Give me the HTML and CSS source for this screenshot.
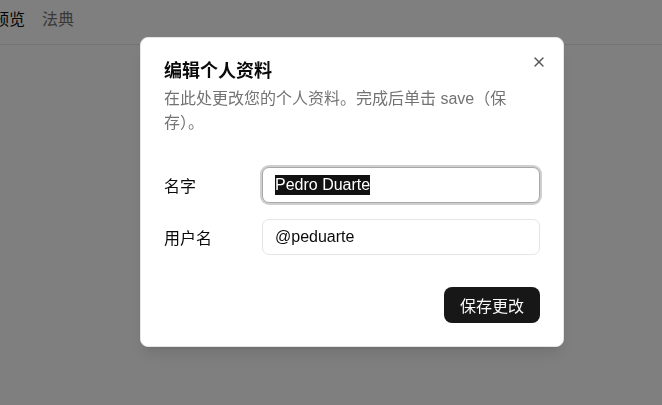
FILE: index.html
```html
<!DOCTYPE html>
<html lang="zh-CN">
<head>
<meta charset="utf-8">
<link rel="stylesheet" href="styles.css">
</head>
<body>
<header class="nav">
  <span class="nav-item active">预览</span>
  <span class="nav-item">法典</span>
</header>
<main class="page"></main>
<div class="overlay"></div>
<div class="dialog">
  <div class="dialog-header">
    <h2 class="dialog-title">编辑个人资料</h2>
    <p class="dialog-desc">在此处更改您的个人资料。完成后单击 save（保存）。</p>
  </div>
  <div class="form">
    <label class="label">名字</label>
    <div class="input focused"><span class="sel">Pedro Duarte</span></div>
    <label class="label">用户名</label>
    <div class="input">@peduarte</div>
  </div>
  <div class="footer">
    <button class="btn">保存更改</button>
  </div>
  <button class="close" aria-label="关闭">
    <svg width="16" height="16" viewBox="0 0 24 24" fill="none" stroke="currentColor" stroke-width="2" stroke-linecap="round" stroke-linejoin="round"><path d="M18 6 6 18"/><path d="m6 6 12 12"/></svg>
  </button>
</div>
</body>
</html>
```
FILE: styles.css
```css
* { box-sizing: border-box; }
html, body { margin: 0; padding: 0; background: #fff; }
body {
  font-family: "Liberation Sans", "Noto Sans CJK SC", sans-serif;
  color: #0a0a0a;
  width: 662px;
  height: 405px;
  overflow: hidden;
}
.nav {
  display: flex;
  align-items: center;
  gap: 17px;
  height: 45px;
  padding-bottom: 8px;
  margin-left: -7px;
  border-bottom: 1px solid #e8e8e8;
  font-size: 16px;
}
.nav-item { color: #737373; }
.nav-item.active { color: #0a0a0a; }
.overlay {
  position: fixed;
  inset: 0;
  background: rgba(0, 0, 0, 0.5);
}
.dialog {
  position: fixed;
  left: 140px;
  top: 37px;
  width: 424px;
  background: #fff;
  border-radius: 8px;
  border: 1px solid #e5e5e5;
  padding: 23px 23px 23px;
  display: flex;
  flex-direction: column;
  gap: 16px;
  box-shadow: 0 10px 15px -3px rgba(0,0,0,0.1), 0 4px 6px -4px rgba(0,0,0,0.1);
}
.dialog-header { display: flex; flex-direction: column; gap: 6px; }
.dialog-title {
  margin: 0;
  font-size: 18px;
  line-height: 20px;
  font-weight: 700;
  color: #0a0a0a;
}
.dialog-desc {
  margin: 0;
  font-size: 16px;
  line-height: 24px;
  color: #737373;
  width: 350px;
}
.form {
  display: grid;
  grid-template-columns: repeat(4, 1fr);
  align-items: center;
  gap: 16px;
  padding: 16px 0;
}
.label {
  font-size: 16px;
  color: #0a0a0a;
}
.input {
  grid-column: span 3;
  height: 36px;
  border: 1px solid #e5e5e5;
  border-radius: 7px;
  padding: 0 12px;
  display: flex;
  align-items: center;
  font-size: 16px;
  color: #0a0a0a;
  background: #fff;
}
.input.focused {
  border-color: #a8a8a8;
  box-shadow: 0 0 0 2px #cfcfcf;
}
.sel {
  background: #111;
  color: #fff;
  line-height: 20px;
}
.footer { display: flex; justify-content: flex-end; }
.btn {
  height: 36px;
  padding: 0 16px;
  border: none;
  border-radius: 8px;
  background: #171717;
  color: #fafafa;
  font-family: "Liberation Sans", "Noto Sans CJK SC", sans-serif;
  font-size: 16px;
}
.close {
  position: absolute;
  right: 16px;
  top: 16px;
  width: 16px;
  height: 16px;
  padding: 0;
  border: none;
  background: none;
  color: #555;
  display: flex;
}
```
